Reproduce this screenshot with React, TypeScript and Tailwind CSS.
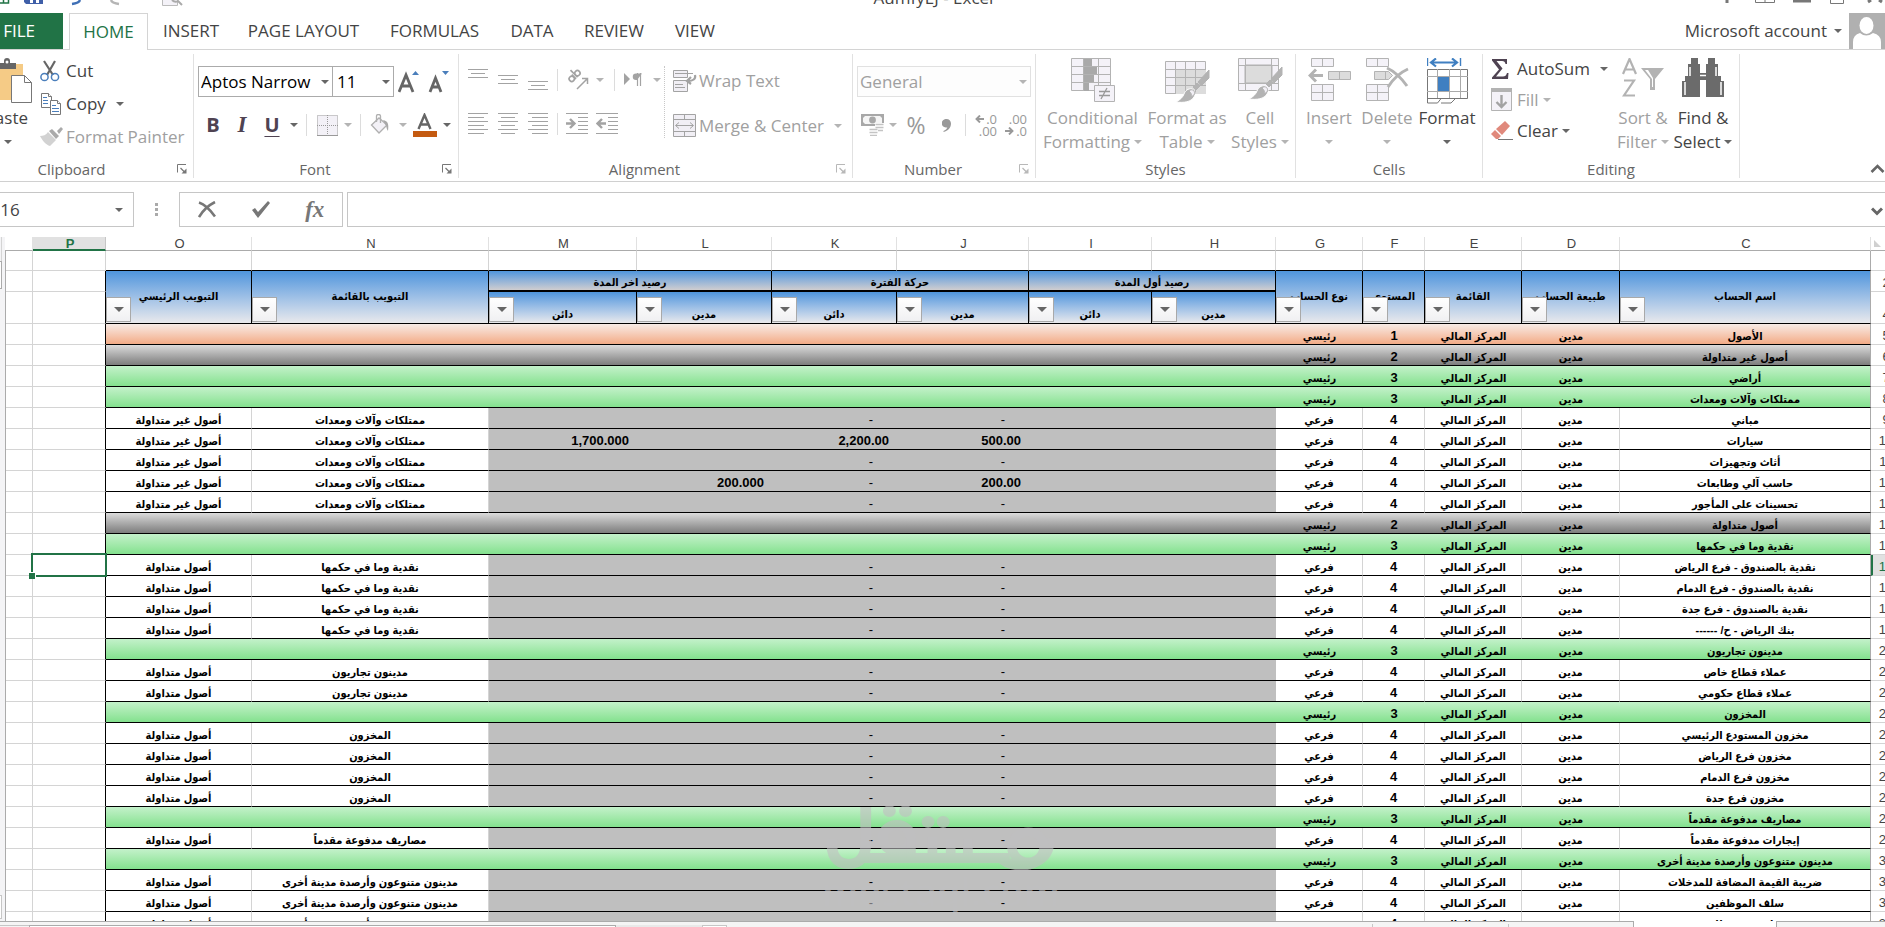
import React from "react";

type Tone = "dark" | "mid" | "dim";

const toneText: Record<Tone, string> = {
  dark: "text-[#444444]",
  mid: "text-[#666666]",
  dim: "text-[#a0a0a0]",
};

function Caret({ dim = false, className = "" }: { dim?: boolean; className?: string }) {
  return (
    <svg className={`shrink-0 ${className}`} width="8" height="4" viewBox="0 0 8 4" aria-hidden="true">
      <path d="M0 0h8L4 4z" fill={dim ? "#b4b4b4" : "#666666"} />
    </svg>
  );
}

function CaretButton({ label, dim = false }: { label: string; dim?: boolean }) {
  return (
    <button type="button" aria-label={label} className="flex h-8 w-3 shrink-0 items-center justify-center">
      <Caret dim={dim} />
    </button>
  );
}

function Divider({ className = "" }: { className?: string }) {
  return <div className={`h-[22px] w-px shrink-0 bg-[#dcdcdc] ${className}`} />;
}

function Launcher({ dim = false }: { dim?: boolean }) {
  const c = dim ? "#b8b8b8" : "#777777";
  return (
    <svg width="10" height="10" viewBox="0 0 10 10" aria-hidden="true" fill="none" stroke={c}>
      <path d="M0.5 8.5V0.5H9" />
      <path d="M3.5 4L8 8.5" strokeWidth="1.2" />
      <path d="M9.5 4.5V9.5H4.5z" fill={c} stroke="none" />
    </svg>
  );
}

function Group({
  name,
  width,
  launcher,
  labelPad = "",
  children,
}: {
  name: string;
  width: string;
  launcher?: "on" | "off";
  labelPad?: string;
  children: React.ReactNode;
}) {
  return (
    <section aria-label={name} className={`flex h-[124px] shrink-0 flex-col border-r border-[#e1e1e1] ${width}`}>
      <div className="flex min-h-0 flex-1">{children}</div>
      <div className="flex h-[18px] items-center text-[15px] leading-[18px] text-[#666666]">
        <span className={`flex-1 text-center ${labelPad}`}>{name}</span>
        {launcher && (
          <button type="button" aria-label={`${name} settings`} className="ml-1.5 mr-1.5">
            <Launcher dim={launcher === "off"} />
          </button>
        )}
      </div>
    </section>
  );
}

function IconButton({
  label,
  width = "w-[30px]",
  children,
}: {
  label: string;
  width?: string;
  children: React.ReactNode;
}) {
  return (
    <button type="button" aria-label={label} className={`flex h-8 shrink-0 items-center justify-center ${width}`}>
      {children}
    </button>
  );
}

function RowButton({
  label,
  icon,
  tone = "dark",
  caret = "",
  height = "h-[33px]",
}: {
  label: string;
  icon: React.ReactNode;
  tone?: Tone;
  caret?: string;
  height?: string;
}) {
  return (
    <button type="button" className={`flex items-center whitespace-nowrap text-[17px] leading-5 ${height} ${toneText[tone]}`}>
      <span className="flex w-[26px] shrink-0 items-center">{icon}</span>
      {label}
      {caret && <Caret dim={tone === "dim"} className={caret} />}
    </button>
  );
}

function BigButton({
  first,
  second,
  tone = "dim",
  width,
  icon,
}: {
  first: string;
  second?: string;
  tone?: Tone;
  width: string;
  icon: React.ReactNode;
}) {
  return (
    <button type="button" className={`flex shrink-0 flex-col items-center text-[17px] leading-6 ${width} ${toneText[tone]}`}>
      <span className="mt-1 flex h-12 items-start">{icon}</span>
      <span className="whitespace-nowrap">{first}</span>
      <span className="flex h-6 items-center gap-1 whitespace-nowrap">
        {second}
        <Caret dim={tone === "dim"} />
      </span>
    </button>
  );
}

function Lines({ rows }: { rows: [number, number, number][] }) {
  return (
    <svg width="20" height="22" viewBox="0 0 20 22" aria-hidden="true" stroke="#a3a3a3">
      {rows.map(([x1, x2, y]) => (
        <path key={y} d={`M${x1} ${y + 0.5}H${x2}`} />
      ))}
    </svg>
  );
}

const Brush = () => (
  <g>
    <path d="M44 12L33 24L36 28L44 20z" fill="#b3b3b3" />
    <path d="M32 25L28 29L31 32L35 28z" fill="#b3b3b3" />
    <path d="M27 31c-4-1-7 2-8 5-1 3-4 6-8 8 8 1 15 0 18-5 2-3 1-6-2-8z" fill="#b3b3b3" stroke="#fff" />
    <path d="M24 33c3-3 7 0 5 4l-3 2c1-3 0-4-2-6z" fill="#f1eff5" stroke="#b3b3b3" />
  </g>
);

function PasteIcon() {
  return (
    <svg width="44" height="46" viewBox="0 0 44 46" aria-hidden="true">
      <path d="M3 6h32v36H3z" fill="#f5cb86" />
      <path d="M10 11V5h6V3q0-3 3-3t3 3v2h6v6z" fill="#666" />
      <circle cx="19" cy="4" r="1.5" fill="#fff" />
      <path d="M23.500 17.500h13l7 7v20h-20z" fill="#fff" stroke="#777" />
      <path d="M36.500 17.500v7h7" fill="none" stroke="#777" />
    </svg>
  );
}

const CutIcon = () => (
  <svg width="20" height="22" viewBox="0 0 20 22" aria-hidden="true" fill="none">
    <path d="M4 1l9 14M15 1L7 15" stroke="#666" strokeWidth="2.200" />
    <circle cx="4.500" cy="17" r="3.600" stroke="#4a7ebb" strokeWidth="1.500" />
    <circle cx="15" cy="17" r="3.600" stroke="#4a7ebb" strokeWidth="1.500" />
  </svg>
);

const CopyIcon = () => (
  <svg width="22" height="24" viewBox="0 0 22 24" aria-hidden="true" fill="#fff" stroke="#777">
    <path d="M1.500 1.500h7l3 3v11h-10z" />
    <path d="M8.500 1.500v3h3" />
    <path d="M3 5.500h4M3 8.500h5M3 11.500h5" stroke="#4a7ebb" />
    <path d="M10.500 8.500h7l3 3v11h-10z" />
    <path d="M17.500 8.500v3h3" />
    <path d="M12 13.500h4M12 16.500h7M12 19.500h7" stroke="#4a7ebb" />
  </svg>
);

const PainterIcon = () => (
  <svg width="23" height="22" viewBox="0 0 23 22" aria-hidden="true">
    <path d="M17 5l4-4 2 2-4 5z" fill="#aaa" />
    <path d="M9 5l3-2 7 7-3 3z" fill="#aaa" />
    <path d="M8 6l8 8-6 6c-4-1-8-6-10-10 3 0 6-1 8-4z" fill="#d2d2d2" />
  </svg>
);

const GrowA = ({ small = false }: { small?: boolean }) => (
  <svg width="22" height="24" viewBox="0 0 22 24" aria-hidden="true">
    <path
      d={small ? "M2 22L7.500 8L13 22M4.500 17h6" : "M1 22L8 5L15 22M4 16h8"}
      fill="none"
      stroke="#666"
      strokeWidth="2.800"
    />
    <path d={small ? "M14 1h7l-3.500 4z" : "M14 5h7l-3.500-4z"} fill="#4a7ebb" />
  </svg>
);

const BordersIcon = () => (
  <svg width="21" height="21" viewBox="0 0 21 21" aria-hidden="true">
    <path d="M0.500 0.500h20v20h-20z" fill="#f3f1f7" stroke="#999" strokeDasharray="1 1" />
    <path d="M10.500 0v21M0 10.500h21" stroke="#999" strokeDasharray="1 1" />
    <path d="M0 20.500h21" stroke="#999" />
  </svg>
);

const BucketIcon = () => (
  <svg width="22" height="22" viewBox="0 0 22 22" aria-hidden="true" fill="none" stroke="#b0b0b0">
    <path d="M1.500 11L9 4l8 7-8 8z" fill="#f3f1f7" strokeWidth="1.300" />
    <path d="M6.500 8V2q0-1.500 2-1.500T10.500 2v7" strokeWidth="1.300" />
    <path d="M13 6c5 1 6 4 5 11-2-2-1-5-3-7z" fill="#a8a8a8" stroke="none" />
  </svg>
);

const FontColorIcon = () => (
  <svg width="24" height="24" viewBox="0 0 24 24" aria-hidden="true">
    <path d="M5.500 16L11.500 2L17.500 16M8 11.500h7" fill="none" stroke="#666" strokeWidth="2.400" />
    <path d="M0 18h24v6H0z" fill="#c45a11" />
  </svg>
);

const OrientIcon = () => (
  <svg width="21" height="22" viewBox="0 0 21 22" aria-hidden="true" fill="none" stroke="#a3a3a3">
    <g transform="translate(2 13) rotate(-45)" strokeWidth="1.700">
      <circle cx="3.500" cy="-1" r="2.600" />
      <path d="M6.500-4v6" />
      <circle cx="11.500" cy="-1" r="2.600" />
      <path d="M8.700-8v10" />
    </g>
    <path d="M9 20L19 10M14 9.500h5.500V15" strokeWidth="1.500" />
  </svg>
);

const DirectionIcon = () => (
  <svg width="19" height="14" viewBox="0 0 19 14" aria-hidden="true">
    <path d="M0 0l6 6-6 6z" fill="#a3a3a3" />
    <path d="M18 0.500h-6a3 3 0 0 0 0 6.500h1" fill="#a3a3a3" />
    <path d="M13.500 0v13M16.500 0v13" stroke="#a3a3a3" strokeWidth="1.200" />
  </svg>
);

const Indent = ({ out = false }: { out?: boolean }) => (
  <svg width="22" height="22" viewBox="0 0 22 22" aria-hidden="true" stroke="#a3a3a3" fill="none">
    <path d="M0 0.500h22M12 4.500h10M12 8.500h10M12 12.500h10M12 16.500h10M0 20.500h22" />
    <path d={out ? "M10 10.500H2M6 6l-4.500 4.500L6 15" : "M0 10.500h8M4 6l4.500 4.500L4 15"} strokeWidth="2.400" />
  </svg>
);

const WrapIcon = () => (
  <svg width="24" height="22" viewBox="0 0 24 22" aria-hidden="true" stroke="#a3a3a3" fill="none">
    <path d="M0.500 0.500h14v7h-14zM0.500 10.500h14v11h-14z" fill="#f1eff5" />
    <path d="M2 3.500h18M2 14.500h8M2 17.500h10" />
    <path d="M22 5c1 4-2 6-7 6M18 7l-4 4 4 3" strokeWidth="2.200" />
  </svg>
);

const MergeIcon = () => (
  <svg width="23" height="23" viewBox="0 0 23 23" aria-hidden="true" stroke="#a3a3a3" fill="none">
    <path d="M0.500 0.500h22v22h-22z" fill="#f1eff5" />
    <path d="M0 5.500h23M0 17.500h23M11.500 0v5.500M11.500 17.500v5M3 11.500h17M6 8.500l-3.500 3 3.500 3M17 8.500l3.500 3-3.500 3" />
  </svg>
);

const MoneyIcon = () => (
  <svg width="23" height="22" viewBox="0 0 23 22" aria-hidden="true">
    <path d="M0 0h23v12H0z" fill="#a8a8a8" />
    <path d="M4 2h15l2 2v5l-2 1H4L2 8V4z" fill="#f5f5f5" />
    <circle cx="11.500" cy="6" r="3.400" fill="#a8a8a8" />
    <path d="M14 9h9v8h-6v5H8v-8h6z" fill="#fff" />
    <path d="M14.500 10.500h8M14.500 13.500h8M17 16.500h5M8.500 15.500h8M8.500 18.500h8M9 21.500h7" stroke="#c4c4c4" strokeWidth="1.500" />
  </svg>
);

const CommaIcon = () => (
  <svg width="9" height="13" viewBox="0 0 9 13" aria-hidden="true">
    <path d="M4.500 0a4.300 4.300 0 1 0 .8 8.400C4.800 10 3.500 11 1.500 12v1C6 12 9 9 9 4.600 9 1.800 7 0 4.500 0z" fill="#999" />
  </svg>
);

function DecimalIcon({ more = false }: { more?: boolean }) {
  return (
    <span className="flex w-[22px] flex-col text-[13px] leading-3 text-[#999999]">
      <span className="flex items-center justify-between">
        {more ? (
          <svg width="9" height="8" viewBox="0 0 9 8" aria-hidden="true" fill="none" stroke="#999">
            <path d="M9 4H1.500M5 0.500L1.500 4 5 7.500" strokeWidth="1.900" />
          </svg>
        ) : (
          <span />
        )}
        {more ? ".0" : ".00"}
      </span>
      <span className="flex items-center justify-between">
        {more ? (
          <span />
        ) : (
          <svg width="9" height="8" viewBox="0 0 9 8" aria-hidden="true" fill="none" stroke="#999">
            <path d="M0 4h7.500M4 0.500L7.500 4 4 7.500" strokeWidth="1.900" />
          </svg>
        )}
        {more ? ".00" : ".0"}
      </span>
    </span>
  );
}

const CondIcon = () => (
  <svg width="44" height="45" viewBox="0 0 44 45" aria-hidden="true" stroke="#b3b3b3">
    <path d="M0.500 0.500h39v32h-39z" fill="#f4f2f8" />
    <path d="M13 1h8v8h-8zM13 9h13v8H13zM13 17h10v8H13zM13 25h5v8h-5z" fill="#a9a9a9" stroke="none" />
    <path d="M12.500 0v33M27.500 0v33M0 8.500h40M0 16.500h40M0 24.500h40" fill="none" />
    <path d="M23.500 27.500h20v16h-20z" fill="#f4f2f8" />
    <path d="M28 33.500h11M28 37.500h11M36 30l-6 11" stroke="#999" strokeWidth="1.300" />
  </svg>
);

const TableIcon = () => (
  <svg width="45" height="45" viewBox="0 0 45 45" aria-hidden="true" stroke="#b3b3b3">
    <path d="M0.500 3.500h40v32h-40z" fill="#f4f2f8" />
    <path d="M10 12h31v24H10z" fill="#dcdcdc" stroke="none" />
    <path d="M10.500 3v33M20.500 3v33M30.500 3v33M0 11.500h41M0 19.500h41M0 27.500h41" fill="none" />
    <Brush />
  </svg>
);

const CellStyleIcon = () => (
  <svg width="45" height="45" viewBox="0 0 45 45" aria-hidden="true" stroke="#b3b3b3">
    <path d="M0.500 0.500h40v32h-40z" fill="#f4f2f8" />
    <path d="M7 7h27v18H7z" fill="#dcdcdc" />
    <path d="M7.500 0v33M33.500 0v33M0 7.500h41M0 25.500h41" fill="none" />
    <g transform="translate(0 -3)">
      <Brush />
    </g>
  </svg>
);

const InsertIcon = () => (
  <svg width="43" height="44" viewBox="0 0 43 44" aria-hidden="true" stroke="#b3b3b3" fill="#f4f2f8">
    <path d="M3.500 0.500h22v8h-22zM14.500 0.500v8M3.500 26.500h22v16h-22zM14.500 26.500v16M3.500 34.500h22" />
    <path d="M20.500 13.500h22v8h-22zM31.500 13.500v8" fill="#dcdcdc" />
    <path d="M15 17.500H2M8 11.500l-6 6 6 6" fill="none" strokeWidth="3" />
  </svg>
);

const DeleteIcon = () => (
  <svg width="43" height="44" viewBox="0 0 43 44" aria-hidden="true" stroke="#b3b3b3" fill="#f4f2f8">
    <path d="M0.500 0.500h22v8h-22zM11.500 0.500v8M0.500 26.500h22v16h-22zM11.500 26.500v16M0.500 34.500h22" />
    <path d="M8.500 13.500h14l4 4-4 4h-14zM19.500 13.500v8" fill="#dcdcdc" />
    <path d="M21 10c9 4 15 11 20 18M42 11c-9 4-15 10-20 18" fill="none" strokeWidth="3" />
  </svg>
);

const FormatIcon = () => (
  <svg width="41" height="46" viewBox="0 0 41 46" aria-hidden="true" fill="none" stroke="#777">
    <path d="M0.500 0v8M33.500 0v8" stroke="#3f7fc1" strokeWidth="1.400" />
    <path d="M4 4.500h26M9 0.500l-5 4 5 4M25 0.500l5 4-5 4" stroke="#3f7fc1" strokeWidth="2.200" />
    <path d="M0.500 11.500h40v29h-40z" fill="#fff" />
    <path d="M11 19h11v14H11z" fill="#3f7fc1" stroke="none" />
    <path d="M10.500 11v29M22.500 11v29M33.500 11v29M0 18.500h41M0 33.500h41" stroke="#aaa" />
    <path d="M0.500 40v5h10l4-5M14 45h10l5-5" />
  </svg>
);

const SigmaIcon = () => (
  <svg width="18" height="20" viewBox="0 0 18 20" aria-hidden="true">
    <path d="M1 0h15v5h-1.500Q14 2 11 2H5.500l6 7.500-6.500 8h7q3 0 4-3.500h1.500L17 20H1v-1.500l7-8L1 1.500z" fill="#4f4352" />
  </svg>
);

const FillIcon = () => (
  <svg width="21" height="23" viewBox="0 0 21 23" aria-hidden="true">
    <path d="M0.500 0.500h20v22h-20z" fill="#f4f2f8" stroke="#b3b3b3" />
    <path d="M0 0h21v4H0z" fill="#b3b3b3" />
    <path d="M10.500 7v12M5.500 14l5 5 5-5" fill="none" stroke="#a3a3a3" strokeWidth="2.400" />
  </svg>
);

const ClearIcon = () => (
  <svg width="22" height="20" viewBox="0 0 22 20" aria-hidden="true">
    <path d="M14 0l5 5-8 9-6-6z" fill="#e0897c" />
    <path d="M4 9l6 6-3 3H5l-5-5z" fill="#e0897c" />
    <path d="M7 18.500h15" stroke="#777" />
  </svg>
);

const SortIcon = () => (
  <svg width="42" height="40" viewBox="0 0 42 40" aria-hidden="true">
    <path d="M1 16L7.500 1L14 16M3.500 11.500h8M2 22.500h10L2 37.500h11" fill="none" stroke="#b3b3b3" strokeWidth="2.200" />
    <path d="M19 10h23l-9 11v11h-5V21z" fill="#b3b3b3" />
    <path d="M23 12h3l5 8v9h-1v-8z" fill="#fff" />
  </svg>
);

const FindIcon = () => (
  <svg width="42" height="39" viewBox="0 0 42 39" aria-hidden="true">
    <path d="M9 0h7v6h2v9h6V6h2V0h7v6h3v12h3v5h3v16H24V22h-6v17H0V23h3v-5h3V6h3z" fill="#6b6b6b" />
    <path d="M3 24v13M39 24v13M8 9v9M34 9v9M18 17.500h6" stroke="#fff" strokeWidth="1.500" />
  </svg>
);

/* ---------- ribbon ---------- */

function TitleBar() {
  return (
    <header className="flex h-[13px] shrink-0 items-start overflow-hidden">
      <div className="flex flex-1 items-start">
        <svg width="190" height="7" viewBox="0 0 190 7" aria-hidden="true" fill="none">
          <path d="M0 3h8.500V0M3.500 0v3" stroke="#217346" strokeWidth="1.500" />
          <path d="M24 0h19v4H26l-2-2z" fill="#3f5fa8" />
          <path d="M30 0h3v3h-3zM36 0h3v3h-3z" fill="#fff" />
          <path d="M80 0q-1 3-8 4" stroke="#3f6fb5" strokeWidth="2.400" />
          <path d="M111 0q1 3 8 4" stroke="#b5b5b5" strokeWidth="2.400" />
          <path d="M162.500 0v5.500h15V0" fill="#f4f2f8" stroke="#bbb" />
          <path d="M172 0q3 3 6 1l4 4" stroke="#aaa" strokeWidth="2" />
        </svg>
      </div>
      <h1 className="-mt-3 mr-[18px] text-[17px] leading-5 text-[#444444]">AumfyEJ - Excel</h1>
      <div className="flex flex-1 items-start justify-end">
        <svg width="160" height="5" viewBox="0 0 160 5" aria-hidden="true" fill="none" stroke="#777">
          <path d="M2 0v3" strokeWidth="3" />
          <path d="M30.500 0v2.500h19V0M40 0v2.500" />
          <path d="M68 1h18" strokeWidth="3" />
          <path d="M105.500 0v3.500h13V0" />
          <path d="M143 2l3-2M157 2l-3-2" strokeWidth="3" />
        </svg>
      </div>
    </header>
  );
}

const tabs = [
  ["INSERT", "w-[86px]"],
  ["PAGE LAYOUT", "w-[139px]"],
  ["FORMULAS", "w-[123px]"],
  ["DATA", "w-[72px]"],
  ["REVIEW", "w-[92px]"],
  ["VIEW", "w-[70px]"],
];

function TabBar() {
  return (
    <nav className="flex h-[37px] shrink-0 border-b border-[#d4d4d4] text-[17px] text-[#444444]">
      <button type="button" className="h-9 w-[63px] bg-[#217346] pr-7 text-right text-white">
        FILE
      </button>
      <button
        type="button"
        className="-mb-px ml-1.5 h-[37px] w-[79px] border border-b-0 border-[#d4d4d4] bg-white text-[#217346]"
      >
        HOME
      </button>
      {tabs.map(([t, w]) => (
        <button key={t} type="button" className={`h-9 whitespace-nowrap ${w}`}>
          {t}
        </button>
      ))}
      <div className="flex-1" />
      <button type="button" className="flex h-9 items-center gap-[7px] whitespace-nowrap">
        Microsoft account
        <Caret />
        <svg width="36" height="36" viewBox="0 0 36 36" aria-hidden="true">
          <path d="M0 0h36v36H0z" fill="#b0b0b0" />
          <ellipse cx="17.500" cy="12.500" rx="7" ry="8.500" fill="#fff" />
          <path d="M4 36V29q0-7 7-9 6 5 13 0 8 2 8 9v7z" fill="#fff" />
        </svg>
      </button>
    </nav>
  );
}

function Ribbon() {
  return (
    <div className="flex h-[132px] shrink-0 border-b border-[#d0d0d0] pt-1">
      <Group name="Clipboard" width="w-[194px]" launcher="on" labelPad="pr-7">
        <button
          type="button"
          className="flex w-10 shrink-0 flex-col items-end overflow-hidden text-[17px] leading-6 text-[#444444]"
        >
          <span className="mr-2 mt-1 flex h-[50px] items-start">
            <PasteIcon />
          </span>
          <span className="-mt-0.5 mr-3">Paste</span>
          <Caret className="mr-7 mt-2.5" />
        </button>
        <div className="flex flex-col items-start">
          <RowButton label="Cut" icon={<CutIcon />} />
          <RowButton label="Copy" icon={<CopyIcon />} caret="ml-2.5" />
          <RowButton label="Format Painter" tone="dim" icon={<PainterIcon />} />
        </div>
      </Group>

      <Group name="Font" width="w-[265px]" launcher="on">
        <div className="flex flex-col pl-1 pt-3">
          <div className="flex h-[31px]">
            <div className="relative">
              <select
                aria-label="Font name"
                className="h-full w-[135px] appearance-none border border-[#ababab] bg-white pl-0.5 text-[17px] leading-6 text-black"
              >
                <option>Aptos Narrow</option>
              </select>
              <Caret className="pointer-events-none absolute right-1 top-3.5" />
            </div>
            <div className="relative -ml-px">
              <select
                aria-label="Font size"
                className="h-full w-[62px] appearance-none border border-[#ababab] bg-white pl-1 text-[17px] leading-6 text-black"
              >
                <option>11</option>
              </select>
              <Caret className="pointer-events-none absolute right-1 top-3.5" />
            </div>
            <IconButton label="Increase font size">
              <GrowA />
            </IconButton>
            <IconButton label="Decrease font size">
              <GrowA small />
            </IconButton>
          </div>
          <div className="mt-3 flex items-center text-xl text-[#4f4352]">
            <IconButton label="Bold">
              <span className="font-bold">B</span>
            </IconButton>
            <IconButton label="Italic" width="w-7">
              <span className="font-['Liberation_Serif',serif] text-[23px] font-bold italic">I</span>
            </IconButton>
            <IconButton label="Underline" width="w-8">
              <span className="font-bold underline decoration-1 underline-offset-4">U</span>
            </IconButton>
            <CaretButton label="Underline styles" />
            <Divider className="ml-1.5" />
            <span className="w-[5px]" />
            <IconButton label="Borders">
              <BordersIcon />
            </IconButton>
            <CaretButton label="Border styles" dim />
            <Divider className="ml-1.5" />
            <span className="w-1" />
            <IconButton label="Fill color" width="w-8">
              <BucketIcon />
            </IconButton>
            <CaretButton label="Fill colors" dim />
            <IconButton label="Font color" width="w-8">
              <FontColorIcon />
            </IconButton>
            <CaretButton label="Font colors" />
          </div>
        </div>
      </Group>

      <Group name="Alignment" width="w-[394px]" launcher="off">
        <div className="flex w-[205px] flex-col pl-1 pt-2.5">
          <div className="flex items-center">
            <IconButton label="Top align">
              <Lines rows={[[0, 20, 0], [3, 17, 4], [0, 20, 8]]} />
            </IconButton>
            <IconButton label="Middle align">
              <Lines rows={[[0, 20, 6], [3, 17, 10], [0, 20, 14]]} />
            </IconButton>
            <IconButton label="Bottom align">
              <Lines rows={[[0, 20, 12], [3, 17, 16], [0, 20, 20]]} />
            </IconButton>
            <Divider className="mx-1" />
            <IconButton label="Orientation" width="w-8">
              <OrientIcon />
            </IconButton>
            <CaretButton label="Orientation options" dim />
            <Divider className="ml-2" />
            <IconButton label="Text direction" width="w-9">
              <DirectionIcon />
            </IconButton>
            <CaretButton label="Text direction options" dim />
          </div>
          <div className="mt-3 flex items-center">
            <IconButton label="Align left">
              <Lines rows={[[0, 20, 0], [0, 16, 4], [0, 20, 8], [0, 16, 12], [0, 20, 16], [0, 16, 20]]} />
            </IconButton>
            <IconButton label="Center">
              <Lines rows={[[0, 20, 0], [3, 17, 4], [0, 20, 8], [3, 17, 12], [0, 20, 16], [3, 17, 20]]} />
            </IconButton>
            <IconButton label="Align right">
              <Lines rows={[[0, 20, 0], [4, 20, 4], [0, 20, 8], [4, 20, 12], [0, 20, 16], [4, 20, 20]]} />
            </IconButton>
            <Divider className="mx-1" />
            <IconButton label="Increase indent">
              <Indent />
            </IconButton>
            <IconButton label="Decrease indent">
              <Indent out />
            </IconButton>
          </div>
        </div>
        <div className="mt-3 h-[72px] border-l border-dotted border-[#c8c8c8]" />
        <div className="flex flex-col items-start gap-3 pl-2 pt-2.5">
          <RowButton label="Wrap Text" tone="dim" icon={<WrapIcon />} />
          <RowButton label="Merge & Center" tone="dim" icon={<MergeIcon />} caret="ml-2.5" />
        </div>
      </Group>

      <Group name="Number" width="w-[183px]" launcher="off">
        <div className="flex flex-1 flex-col pl-1 pr-1 pt-3">
          <div className="relative h-[31px]">
            <select
              aria-label="Number format"
              className="h-full w-full appearance-none border border-[#e1e1e1] bg-[#fdfdfd] pl-0.5 text-[17px] leading-6 text-[#a0a0a0]"
            >
              <option>General</option>
            </select>
            <Caret dim className="pointer-events-none absolute right-1 top-3.5" />
          </div>
          <div className="mt-3 flex items-center">
            <IconButton label="Accounting format">
              <MoneyIcon />
            </IconButton>
            <CaretButton label="Accounting formats" dim />
            <IconButton label="Percent style" width="w-[34px]">
              <span className="text-[23px] text-[#999999]">%</span>
            </IconButton>
            <IconButton label="Comma style" width="w-[26px]">
              <CommaIcon />
            </IconButton>
            <Divider className="ml-1.5" />
            <span className="w-[5px]" />
            <IconButton label="Increase decimal">
              <DecimalIcon more />
            </IconButton>
            <IconButton label="Decrease decimal">
              <DecimalIcon />
            </IconButton>
          </div>
        </div>
      </Group>

      <Group name="Styles" width="w-[260px]">
        <div className="flex pl-1">
          <BigButton width="w-[105px]" first="Conditional" second="Formatting" icon={<CondIcon />} />
          <BigButton width="w-[84px]" first="Format as" second="Table" icon={<TableIcon />} />
          <BigButton width="w-[62px]" first="Cell" second="Styles" icon={<CellStyleIcon />} />
        </div>
      </Group>

      <Group name="Cells" width="w-[187px]">
        <div className="flex pl-1">
          <BigButton width="w-[58px]" first="Insert" icon={<InsertIcon />} />
          <BigButton width="w-[58px]" first="Delete" icon={<DeleteIcon />} />
          <BigButton width="w-[62px]" tone="dark" first="Format" icon={<FormatIcon />} />
        </div>
      </Group>

      <Group name="Editing" width="w-[257px]">
        <div className="flex w-[131px] flex-col items-start pl-2">
          <RowButton label="AutoSum" height="h-[30px]" icon={<SigmaIcon />} caret="ml-2.5" />
          <RowButton label="Fill" height="h-[31px]" tone="dim" icon={<FillIcon />} caret="ml-1" />
          <RowButton label="Clear" height="h-[31px]" icon={<ClearIcon />} caret="ml-1" />
        </div>
        <BigButton width="w-[58px]" first="Sort &amp;" second="Filter" icon={<SortIcon />} />
        <BigButton width="w-[62px]" tone="dark" first="Find &amp;" second="Select" icon={<FindIcon />} />
      </Group>

      <div className="flex flex-1 items-end justify-end pb-2">
        <button type="button" aria-label="Collapse the ribbon">
          <svg width="15" height="9" viewBox="0 0 15 9" aria-hidden="true">
            <path d="M1.500 8l6-6 6 6" fill="none" stroke="#666" strokeWidth="2.600" />
          </svg>
        </button>
      </div>
    </div>
  );
}

function FormulaBar() {
  return (
    <div className="flex h-[55px] shrink-0 items-start pt-2.5">
      <div className="flex h-[35px] w-[134px] shrink-0 items-center overflow-hidden border border-l-0 border-[#c6c6c6]">
        <input
          aria-label="Name box"
          defaultValue="P16"
          className="-ml-2.5 w-[125px] shrink-0 bg-transparent text-[17px] leading-6 text-[#444444] outline-none"
        />
        <Caret />
      </div>
      <svg className="mx-[21px] mt-[11px] shrink-0" width="3" height="13" viewBox="0 0 3 13" aria-hidden="true">
        <path d="M0 0h3v3H0zM0 5h3v3H0zM0 10h3v3H0z" fill="#aaa" />
      </svg>
      <div className="flex h-[35px] w-[164px] shrink-0 items-center justify-around border border-[#c6c6c6]">
        <button type="button" aria-label="Cancel">
          <svg width="18" height="17" viewBox="0 0 18 17" aria-hidden="true" fill="none" stroke="#777">
            <path d="M1 1.500c6 2 11 7 16 14M17 1C11 4 5 9 1 16" strokeWidth="2.600" />
          </svg>
        </button>
        <button type="button" aria-label="Enter">
          <svg width="19" height="17" viewBox="0 0 19 17" aria-hidden="true">
            <path d="M1 9l3-2 3 4L17 0l2 2L7 17z" fill="#777" />
          </svg>
        </button>
        <button
          type="button"
          aria-label="Insert function"
          className="font-['Liberation_Serif',serif] text-[23px] font-bold italic leading-6 text-[#777777]"
        >
          fx
        </button>
      </div>
      <div className="ml-1 flex h-[35px] min-w-0 flex-1 items-center border border-r-0 border-[#c6c6c6]">
        <input aria-label="Formula bar" className="h-full min-w-0 flex-1 bg-transparent px-2 text-[17px] outline-none" />
        <button type="button" aria-label="Expand formula bar" className="mr-0.5 mt-1">
          <svg width="12" height="9" viewBox="0 0 12 9" aria-hidden="true">
            <path d="M1 1.500l5 5 5-5" fill="none" stroke="#666" strokeWidth="3" />
          </svg>
        </button>
      </div>
    </div>
  );
}

/* ---------- sheet ---------- */

const GREEN = "bg-linear-to-b from-[#c3f1ca] to-[#83e18e]";
const ORANGE = "bg-linear-to-b from-[#f7ebe6] to-[#f2ab86]";
const GRAY = "bg-linear-to-b from-[#dcdcdc] to-[#7d7d7d]";
const HEAD = "bg-linear-to-b from-[#4e95dc] to-[#e9e9ec]";
const HEAD_TOP = "bg-linear-to-b from-[#4e95dc] to-[#cfcdcf]";

const bands: Record<string, string> = { "1": ORANGE, "2": GRAY, "3": GREEN };

interface Row {
  level: "1" | "2" | "3" | "4";
  name: string;
  list?: string;
  main?: string;
  J?: string;
  K?: string;
  L?: string;
  M?: string;
}

const FIXED = "ممتلكات وآلات ومعدات";
const CASH = "نقدية وما في حكمها";
const DEBTORS = "مدينون تجاريون";
const STOCK = "المخزون";
const PREPAID = "مصاريف مدفوعة مقدماً";
const OTHER = "مدينون متنوعون وأرصدة مدينة أخرى";
const NON_CURRENT = "أصول غير متداولة";
const CURRENT = "أصول متداولة";

const leaf = (name: string, list: string, main = CURRENT, extra: Partial<Row> = {}): Row => ({
  level: "4",
  name,
  list,
  main,
  J: "-",
  K: "-",
  ...extra,
});

const rows: Row[] = [
  { level: "1", name: "الأصول" },
  { level: "2", name: NON_CURRENT },
  { level: "3", name: "أراضي" },
  { level: "3", name: FIXED },
  leaf("مباني", FIXED, NON_CURRENT),
  leaf("سيارات", FIXED, NON_CURRENT, { J: "500.00", K: "2,200.00", M: "1,700.000" }),
  leaf("أثاث وتجهيزات", FIXED, NON_CURRENT),
  leaf("حاسب آلي وطابعات", FIXED, NON_CURRENT, { J: "200.00", L: "200.000" }),
  leaf("تحسينات على المأجور", FIXED, NON_CURRENT),
  { level: "2", name: CURRENT },
  { level: "3", name: CASH },
  leaf("نقدية بالصندوق - فرع الرياض", CASH),
  leaf("نقدية بالصندوق - فرع الدمام", CASH),
  leaf("نقدية بالصندوق - فرع جدة", CASH),
  leaf("بنك الرياض - ح/ ------", CASH),
  { level: "3", name: DEBTORS },
  leaf("عملاء قطاع خاص", DEBTORS),
  leaf("عملاء قطاع حكومي", DEBTORS),
  { level: "3", name: STOCK },
  leaf("مخزون المستودع الرئيسي", STOCK),
  leaf("مخزون فرع الرياض", STOCK),
  leaf("مخزون فرع الدمام", STOCK),
  leaf("مخزون فرع جدة", STOCK),
  { level: "3", name: PREPAID },
  leaf("إيجارات مدفوعة مقدماً", PREPAID),
  { level: "3", name: OTHER },
  leaf("ضريبة القيمة المضافة للمدخلات", OTHER),
  leaf("سلف الموظفين", OTHER),
  leaf("دفعات مقدمة للغير", OTHER),
];

const letters = ["C", "D", "E", "F", "G", "H", "I", "J", "K", "L", "M", "N", "O", "P", ""];

function RowNumber({ n, active = false }: { n: number; active?: boolean }) {
  return (
    <th
      scope="row"
      className={`h-px overflow-hidden border-b border-b-[#d4d4d4] p-0 align-bottom font-normal ${
        active ? "border-l-2 border-l-[#217346] bg-[#e1e1e1] text-[#217346]" : "text-[#444444]"
      }`}
    >
      <div dir="ltr" className="h-5 w-3.5 overflow-hidden">
        <div className="w-[30px] text-center text-[13px] leading-6">{n}</div>
      </div>
    </th>
  );
}

function Filter({ label }: { label: string }) {
  return (
    <button
      type="button"
      aria-label={`Filter ${label}`}
      className="absolute bottom-px left-0 flex size-[25px] items-center justify-center border border-[#a9a9a9] bg-linear-to-b from-white to-[#f0f0f2]"
    >
      <svg width="10" height="5" viewBox="0 0 10 5" aria-hidden="true">
        <path d="M0 0h10L5 5z" fill="#666" />
      </svg>
    </button>
  );
}

function HeadCell({ text, last = false }: { text: string; last?: boolean }) {
  return (
    <th
      scope="col"
      rowSpan={2}
      className={`relative overflow-hidden border-b border-b-black p-0 align-middle ${HEAD} ${
        last ? "border-r border-r-[#ababab]" : "border-r border-r-black"
      }`}
    >
      <div className="mb-1 h-5 whitespace-nowrap leading-[22px]">{text}</div>
      <Filter label={text} />
    </th>
  );
}

function SubHead({ text }: { text: string }) {
  return (
    <th scope="col" className={`relative h-8 border-b border-r border-black p-0 align-bottom ${HEAD}`}>
      <div className="h-5 leading-[22px]">{text}</div>
      <Filter label={text} />
    </th>
  );
}

function Blanks({ children }: { children?: React.ReactNode }) {
  return (
    <>
      <td className="relative border-b border-r border-b-[#d4d4d4] border-r-black p-0">{children}</td>
      <td className="border-b border-r border-[#d4d4d4] p-0" />
    </>
  );
}

function Selection() {
  return (
    <div className="pointer-events-none absolute -inset-0.5 z-10 border-2 border-[#217346]">
      <span className="absolute -bottom-1 -left-1 size-[7px] border-r border-t border-white bg-[#217346]" />
    </div>
  );
}

function DataRow({ row, n }: { row: Row; n: number }) {
  const band = bands[row.level];
  const cell = `h-[21px] border-b border-b-black p-0 ${band ? band : "border-r border-r-[#d4d4d4]"}`;
  const num = `h-[21px] border-b border-black p-0 text-right ${band ? band : "bg-[#bfbfbf]"}`;
  const text = "h-5 whitespace-nowrap leading-6";
  const amounts = [undefined, undefined, row.J, row.K, row.L, row.M];
  return (
    <tr>
      <RowNumber n={n} active={n === 16} />
      <td className={`h-[21px] border-b border-r border-b-black border-r-[#ababab] p-0 ${band ?? ""}`}>
        <div className={text}>{row.name}</div>
      </td>
      <td className={cell}>
        <div className={text}>مدين</div>
      </td>
      <td className={cell}>
        <div className={text}>المركز المالي</div>
      </td>
      <td className={cell}>
        <div className={`${text} text-[13px]`}>{row.level}</div>
      </td>
      <td className={cell}>
        <div className={text}>{row.level === "4" ? "فرعي" : "رئيسي"}</div>
      </td>
      {amounts.map((v, i) => (
        <td key={i} className={num}>
          {v && (
            <div dir="ltr" className={`${text} text-[13px] ${v === "-" ? "pr-6 font-normal" : "pr-2"}`}>
              {v}
            </div>
          )}
        </td>
      ))}
      <td className={cell}>
        <div className={text}>{row.list}</div>
      </td>
      <td className={cell}>
        <div className={text}>{row.main}</div>
      </td>
      <Blanks>{n === 16 && <Selection />}</Blanks>
    </tr>
  );
}

function Watermark() {
  return (
    <div
      aria-hidden="true"
      className="pointer-events-none absolute bottom-3 left-[821px] flex w-[228px] flex-col items-center text-[#c0bfc1] opacity-60"
    >
      <svg
        width="228"
        height="68"
        viewBox="0 0 212 68"
        preserveAspectRatio="none"
        fill="none"
        stroke="currentColor"
      >
        <path
          d="M5 34c-2 16 4 25 15 25s16-8 16-20V2M30 53h140M162 53c6 8 22 10 32 4 10-5 13-14 12-24"
          strokeWidth="10"
        />
        <circle cx="65" cy="33" r="13" strokeWidth="10" />
        <path d="M78 33v20M98 32v20M115 34v18M131 34v18" strokeWidth="9" />
        <circle cx="187" cy="42" r="15" strokeWidth="9" />
        <g fill="currentColor" stroke="none">
          <circle cx="58" cy="6" r="6" />
          <circle cx="73" cy="6" r="6" />
          <circle cx="94" cy="17" r="6" />
          <circle cx="108" cy="17" r="6" />
        </g>
      </svg>
      <span className="text-[38px] font-semibold leading-9">mostaql.com</span>
    </div>
  );
}

function Sheet() {
  return (
    <div className="flex min-h-0 flex-1 overflow-hidden">
      <div className="flex w-[5px] shrink-0 flex-col bg-[#f4f4f6]">
        <div className="h-6 w-0.5 border-r border-[#d4d4d4]" />
        <div className="h-7 w-0.5 border-y border-r border-[#ababab] bg-white" />
        <div className="flex-1" />
        <div className="mb-0.5 h-6 w-0.5 border-y border-r border-[#c6c6c6] bg-white" />
      </div>
      <div className="mt-[13px] w-px shrink-0 bg-[#ababab]" />
      <div className="relative min-w-0 flex-1 overflow-hidden">
        <table
          dir="rtl"
          className="w-full table-fixed border-separate border-spacing-0 text-center font-['Liberation_Sans','DejaVu_Sans_Condensed','DejaVu_Sans',sans-serif] text-[11px] font-bold text-black"
        >
          <colgroup>
            <col className="w-3.5" />
            <col />
            <col className="w-[98px]" />
            <col className="w-[97px]" />
            <col className="w-[62px]" />
            <col className="w-[87px]" />
            <col className="w-[124px]" />
            <col className="w-[123px]" />
            <col className="w-[132px]" />
            <col className="w-[125px]" />
            <col className="w-[135px]" />
            <col className="w-[148px]" />
            <col className="w-[237px]" />
            <col className="w-[146px]" />
            <col className="w-[73px]" />
            <col className="w-[27px]" />
          </colgroup>
          <thead>
            <tr className="text-[13px] text-[#444444]">
              <th className="h-3.5 border-b border-[#ababab] p-0">
                <svg className="mr-1" width="7" height="7" viewBox="0 0 7 7" aria-hidden="true">
                  <path d="M0 0v7h7z" fill="#d0d0d0" />
                </svg>
              </th>
              {letters.map((l, i) => (
                <th
                  key={i}
                  scope="col"
                  className={`h-3.5 border-b p-0 ${
                    l === "P"
                      ? "border-r border-b-2 border-b-[#217346] border-r-[#c6c6c6] bg-[#e1e1e1] font-bold text-[#217346]"
                      : "border-r border-b-[#ababab] border-r-[#e1e1e1] font-normal"
                  }`}
                >
                  <div className="-mb-px h-3 pl-0.5 leading-3">{l}</div>
                </th>
              ))}
            </tr>
            <tr>
              <th className="h-5 border-b border-[#d4d4d4] p-0" />
              {letters.map((l, i) => (
                <td
                  key={i}
                  className={`h-5 border-b border-r p-0 ${
                    i === 0
                      ? "border-b-black border-r-[#ababab]"
                      : i > 12
                        ? "border-[#d4d4d4]"
                        : "border-b-black border-r-[#d4d4d4]"
                  }`}
                />
              ))}
            </tr>
            <tr>
              <RowNumber n={2} />
              <HeadCell text="اسم الحساب" last />
              <HeadCell text="طبيعة الحساب" />
              <HeadCell text="القائمة" />
              <HeadCell text="المستوى" />
              <HeadCell text="نوع الحساب" />
              {["رصيد أول المدة", "حركة الفترة", "رصيد اخر المدة"].map((t) => (
                <th
                  key={t}
                  scope="colgroup"
                  colSpan={2}
                  className={`h-[21px] border-b-2 border-r border-black p-0 ${HEAD_TOP}`}
                >
                  <div className="h-[19px] leading-[22px]">{t}</div>
                </th>
              ))}
              <HeadCell text="التبويب بالقائمة" />
              <HeadCell text="التبويب الرئيسي" />
              <Blanks />
            </tr>
            <tr>
              <RowNumber n={4} />
              <SubHead text="مدين" />
              <SubHead text="دائن" />
              <SubHead text="مدين" />
              <SubHead text="دائن" />
              <SubHead text="مدين" />
              <SubHead text="دائن" />
              <Blanks />
            </tr>
          </thead>
          <tbody>
            {rows.map((r, i) => (
              <DataRow key={i} row={r} n={i + 5} />
            ))}
          </tbody>
        </table>
        <Watermark />
      </div>
    </div>
  );
}

function SheetTabs() {
  return (
    <footer className="flex h-1.5 shrink-0 bg-white">
      <div className="flex flex-1 border-r border-t border-[#ababab] bg-[#f5f5f5]">
        <div className="mt-[3px] w-[29px] border-t border-[#c6c6c6]" />
        <div className="mt-[3px] w-[587px] border-x border-t border-[#ababab] bg-white" />
        <div className="mt-[3px] w-[86px] bg-[#e9e9e9]" />
        <div className="mt-[3px] w-[25px] border-x border-t border-[#c6c6c6] bg-white" />
        <div className="flex-1" />
        <div className="mt-0.5 w-[137px] border-x border-[#c6c6c6]" />
        <div className="w-[124px]" />
      </div>
      <div className="w-[142px]" />
      <div className="w-[109px] border-l border-t border-[#ababab] bg-[#f5f5f5]" />
    </footer>
  );
}

export default function App() {
  return (
    <main className="flex h-screen flex-col overflow-hidden bg-white font-['Open_Sans','Noto_Sans',sans-serif]">
      <TitleBar />
      <TabBar />
      <Ribbon />
      <FormulaBar />
      <Sheet />
      <SheetTabs />
    </main>
  );
}
